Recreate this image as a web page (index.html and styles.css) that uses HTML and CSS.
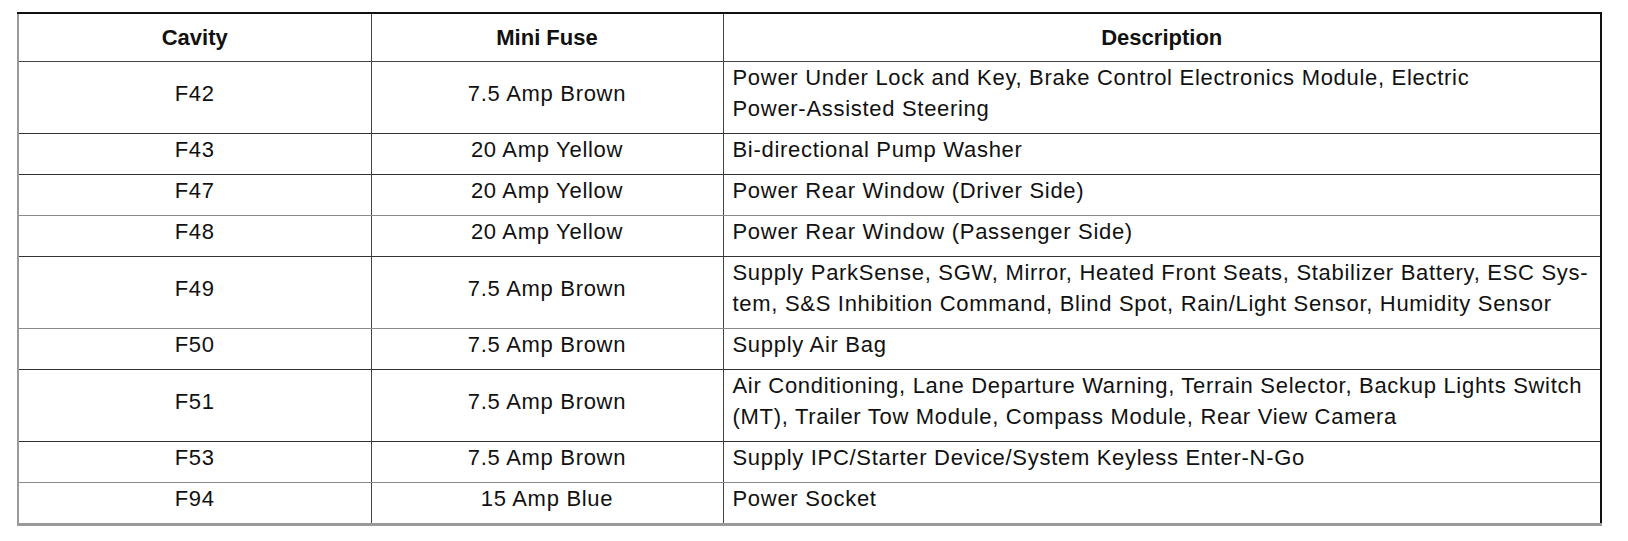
FILE: index.html
```html
<!DOCTYPE html>
<html>
<head>
<meta charset="utf-8">
<link rel="stylesheet" href="styles.css">
</head>
<body>
<table class="fuses">
  <colgroup>
    <col class="c-cav">
    <col class="c-fuse">
    <col class="c-desc">
  </colgroup>
  <thead>
    <tr><th>Cavity</th><th>Mini Fuse</th><th>Description</th></tr>
  </thead>
  <tbody>
    <tr class="two"><td>F42</td><td>7.5 Amp Brown</td><td class="desc">Power Under Lock and Key, Brake Control Electronics Module, Electric<br>Power-Assisted Steering</td></tr>
    <tr><td>F43</td><td>20 Amp Yellow</td><td class="desc">Bi-directional Pump Washer</td></tr>
    <tr class="light"><td>F47</td><td>20 Amp Yellow</td><td class="desc">Power Rear Window (Driver Side)</td></tr>
    <tr><td>F48</td><td>20 Amp Yellow</td><td class="desc">Power Rear Window (Passenger Side)</td></tr>
    <tr class="two light"><td>F49</td><td>7.5 Amp Brown</td><td class="desc">Supply ParkSense, SGW, Mirror, Heated Front Seats, Stabilizer Battery, ESC Sys-<br>tem, S&amp;S Inhibition Command, Blind Spot, Rain/Light Sensor, Humidity Sensor</td></tr>
    <tr><td>F50</td><td>7.5 Amp Brown</td><td class="desc">Supply Air Bag</td></tr>
    <tr class="two"><td>F51</td><td>7.5 Amp Brown</td><td class="desc">Air Conditioning, Lane Departure Warning, Terrain Selector, Backup Lights Switch<br>(MT), Trailer Tow Module, Compass Module, Rear View Camera</td></tr>
    <tr class="light"><td>F53</td><td>7.5 Amp Brown</td><td class="desc">Supply IPC/Starter Device/System Keyless Enter-N-Go</td></tr>
    <tr class="last"><td>F94</td><td>15 Amp Blue</td><td class="desc">Power Socket</td></tr>
  </tbody>
</table>
</body>
</html>
```
FILE: styles.css
```css
html, body {
  margin: 0;
  padding: 0;
  background: #ffffff;
}
body {
  padding: 12px 0 0 17px;
  font-family: "Liberation Sans", Arial, sans-serif;
  color: #111111;
}
.fuses {
  border-collapse: collapse;
  width: 1585px;
  table-layout: fixed;
  font-size: 22px;
  letter-spacing: 0.7px;
  line-height: 31px;
  border-top: 2px solid #111111;
  border-right: 2px solid #111111;
  border-left: 2px solid #9a9a9a;
  border-bottom: 3px solid #9a9a9a;
}
.c-cav { width: 353px; }
.c-fuse { width: 352px; }
.c-desc { width: auto; }
.fuses th {
  font-weight: bold;
  letter-spacing: 0;
  text-align: center;
  height: 47px;
  padding: 0;
  border-left: 1px solid #444444;
  border-bottom: 1px solid #444444;
}
.fuses td {
  text-align: center;
  padding: 0 0 9px;
  height: 31px;
  border-left: 1px solid #444444;
  border-bottom: 1px solid #333333;
  vertical-align: middle;
}
.fuses tr.light td {
  border-bottom-color: #8a8a8a;
}
.fuses td.desc {
  text-align: left;
  padding-left: 9px;
  padding-right: 2px;
}
.fuses tr.two td {
  height: 62px;
}
```
